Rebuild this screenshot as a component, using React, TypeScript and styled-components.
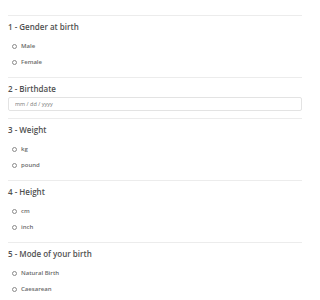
import React from 'react';
import styled, { createGlobalStyle } from 'styled-components';

const GlobalStyle = createGlobalStyle`
  body {
    margin: 0;
    background: #fff;
    font-family: "Open Sans", "Liberation Sans", sans-serif;
  }
`;

const Page = styled.main`
  padding: 15px 18px 0 8px;
`;

const Section = styled.section`
  border-top: 1px solid #ececec;
  padding: 6px 0 7px;
`;

const Title = styled.h2`
  margin: 0;
  font-size: 8px;
  line-height: 10px;
  font-weight: 600;
  color: #505050;
`;

const Options = styled.div`
  display: flex;
  flex-direction: column;
  margin-top: 6px;
`;

const Option = styled.label`
  display: flex;
  align-items: center;
  gap: 4px;
  height: 16px;
  padding-left: 4px;
  font-size: 6px;
  font-weight: 600;
  color: #6a6a6a;
`;

const Circle = styled.span`
  width: 5px;
  height: 5px;
  box-sizing: border-box;
  border: 0.7px solid #8a8a8a;
  border-radius: 50%;
`;

const DateInput = styled.input`
  display: block;
  box-sizing: border-box;
  width: 100%;
  height: 14px;
  margin-top: 3px;
  padding: 0 6px;
  border: 1px solid #e3e3e3;
  border-radius: 2px;
  font-family: inherit;
  font-size: 5.5px;
  color: #666;
  outline: none;

  &::placeholder {
    color: #777;
  }
`;

type Question = { title: string; options?: string[]; date?: boolean };

const questions: Question[] = [
  { title: '1 - Gender at birth', options: ['Male', 'Female'] },
  { title: '2 - Birthdate', date: true },
  { title: '3 - Weight', options: ['kg', 'pound'] },
  { title: '4 - Height', options: ['cm', 'inch'] },
  { title: '5 - Mode of your birth', options: ['Natural Birth', 'Caesarean'] },
];

const App = () => {
  return (
    <>
      <GlobalStyle />
      <Page>
        {questions.map((q) => (
          <Section key={q.title}>
            <Title>{q.title}</Title>
            {q.date ? (
              <DateInput type="text" placeholder="mm / dd / yyyy" />
            ) : (
              <Options>
                {q.options?.map((o) => (
                  <Option key={o}>
                    <Circle />
                    {o}
                  </Option>
                ))}
              </Options>
            )}
          </Section>
        ))}
      </Page>
    </>
  );
};

export default App;
